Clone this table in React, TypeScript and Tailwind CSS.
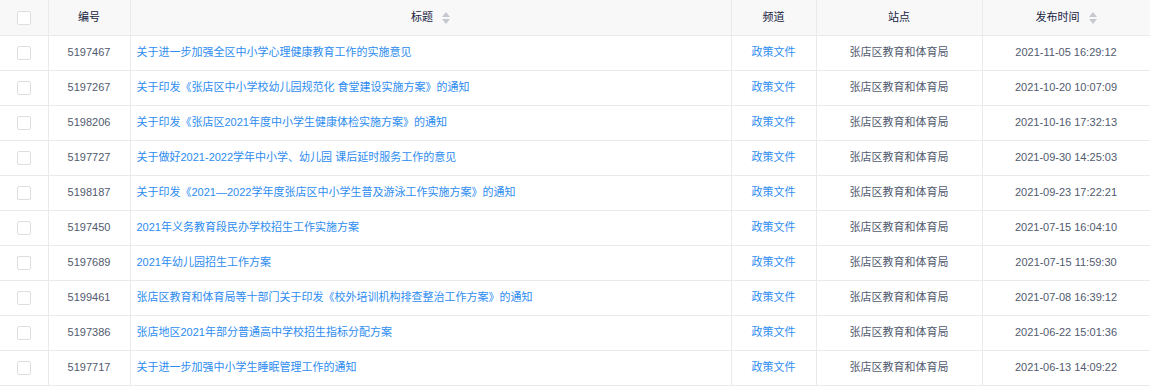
const rows = [
  ["5197467", "关于进一步加强全区中小学心理健康教育工作的实施意见", "2021-11-05 16:29:12"],
  ["5197267", "关于印发《张店区中小学校幼儿园规范化 食堂建设实施方案》的通知", "2021-10-20 10:07:09"],
  ["5198206", "关于印发《张店区2021年度中小学生健康体检实施方案》的通知", "2021-10-16 17:32:13"],
  ["5197727", "关于做好2021-2022学年中小学、幼儿园 课后延时服务工作的意见", "2021-09-30 14:25:03"],
  ["5198187", "关于印发《2021—2022学年度张店区中小学生普及游泳工作实施方案》的通知", "2021-09-23 17:22:21"],
  ["5197450", "2021年义务教育段民办学校招生工作实施方案", "2021-07-15 16:04:10"],
  ["5197689", "2021年幼儿园招生工作方案", "2021-07-15 11:59:30"],
  ["5199461", "张店区教育和体育局等十部门关于印发《校外培训机构排查整治工作方案》的通知", "2021-07-08 16:39:12"],
  ["5197386", "张店地区2021年部分普通高中学校招生指标分配方案", "2021-06-22 15:01:36"],
  ["5197717", "关于进一步加强中小学生睡眠管理工作的通知", "2021-06-13 14:09:22"],
];

function Checkbox() {
  return <span className="inline-block w-[14px] h-[14px] border border-[#dcdee2] rounded-[2px] bg-white align-middle" />;
}

function SortIcon() {
  return (
    <span className="inline-flex flex-col items-center gap-[2px] ml-[9px] align-middle">
      <svg width="8" height="5" viewBox="0 0 8 5"><path d="M4 0L8 5H0z" fill="#c5c8ce" /></svg>
      <svg width="8" height="5" viewBox="0 0 8 5"><path d="M0 0H8L4 5z" fill="#c5c8ce" /></svg>
    </span>
  );
}

export default function App() {
  return (
    <div
      className="w-[1150px] h-[387px] bg-white overflow-hidden"
      style={{ fontFamily: '"Liberation Sans", "Noto Sans CJK SC", sans-serif' }}
    >
      <table className="w-[1150px] table-fixed border-collapse text-[11px] border-r border-b border-[#e8eaec]">
        <colgroup>
          <col className="w-[48px]" />
          <col className="w-[82px]" />
          <col className="w-[601px]" />
          <col className="w-[85px]" />
          <col className="w-[166px]" />
          <col className="w-[168px]" />
        </colgroup>
        <thead>
          <tr className="h-[35px] bg-[#f8f8f9] text-[#17233d]">
            <th className="border-r border-b border-[#e8eaec] text-center font-normal"><Checkbox /></th>
            <th className="border-r border-b border-[#e8eaec] text-center font-normal">编号</th>
            <th className="border-r border-b border-[#e8eaec] text-center font-normal">标题<SortIcon /></th>
            <th className="border-r border-b border-[#e8eaec] text-center font-normal">频道</th>
            <th className="border-r border-b border-[#e8eaec] text-center font-normal">站点</th>
            <th className="border-b border-[#e8eaec] text-center font-normal">发布时间<SortIcon /></th>
          </tr>
        </thead>
        <tbody>
          {rows.map(([id, title, time]) => (
            <tr key={id} className="h-[35px] text-[#515a6e]">
              <td className="border-r border-b border-[#e8eaec] text-center"><Checkbox /></td>
              <td className="border-r border-b border-[#e8eaec] text-center">{id}</td>
              <td className="border-r border-b border-[#e8eaec] pl-[6px] text-[#2d8cf0] whitespace-nowrap overflow-hidden">{title}</td>
              <td className="border-r border-b border-[#e8eaec] text-center text-[#2d8cf0]">政策文件</td>
              <td className="border-r border-b border-[#e8eaec] text-center">张店区教育和体育局</td>
              <td className="border-b border-[#e8eaec] text-center">{time}</td>
            </tr>
          ))}
        </tbody>
      </table>
    </div>
  );
}
